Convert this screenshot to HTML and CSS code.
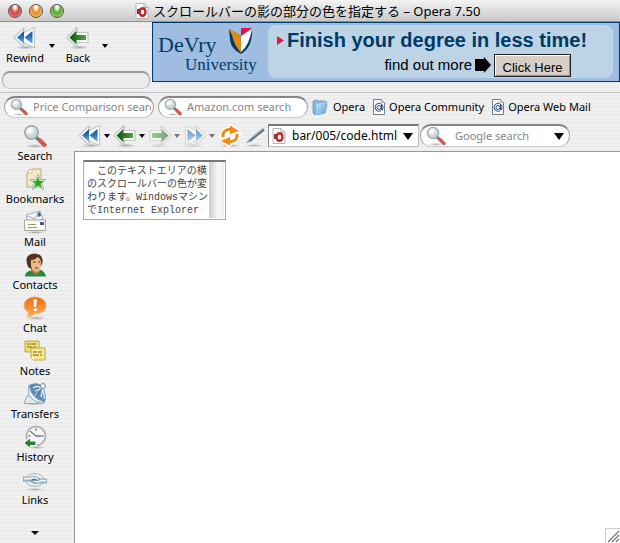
FILE: index.html
```html
<!DOCTYPE html>
<html lang="ja">
<head>
<meta charset="utf-8">
<title>スクロールバーの影の部分の色を指定する – Opera 7.50</title>
<link rel="stylesheet" href="styles.css">
</head>
<body>
<svg class="defs" aria-hidden="true">
  <defs>
    <linearGradient id="blue" x1="0" y1="0" x2="0" y2="1"><stop offset="0" stop-color="#16498c"/><stop offset=".5" stop-color="#2b78bd"/><stop offset="1" stop-color="#79bfe8"/></linearGradient>
    <linearGradient id="green" x1="0" y1="0" x2="1" y2="0"><stop offset="0" stop-color="#0d5412"/><stop offset="1" stop-color="#4fa63f"/></linearGradient>
    <linearGradient id="orange" x1="0" y1="0" x2="0" y2="1"><stop offset="0" stop-color="#f06a10"/><stop offset="1" stop-color="#ffb04a"/></linearGradient>
    <radialGradient id="lens" cx=".4" cy=".35"><stop offset="0" stop-color="#fff"/><stop offset="1" stop-color="#bfd0d4"/></radialGradient>
    <linearGradient id="fold" x1="0" y1="0" x2="1" y2="1"><stop offset="0" stop-color="#d9effc"/><stop offset="1" stop-color="#4f9ddd"/></linearGradient>
    <radialGradient id="shade"><stop offset="0" stop-color="#000" stop-opacity=".3"/><stop offset="1" stop-color="#000" stop-opacity="0"/></radialGradient>
  </defs>
  <symbol id="rewind" viewBox="0 0 24 24">
    <ellipse cx="13" cy="21.500" rx="10" ry="2" fill="url(#shade)"/>
    <path d="M1 11.500 11 2v4.500L21.500 1.500v20L11 16.500V21z" fill="#fff" stroke="#c3c7cc" stroke-width="1.200" stroke-linejoin="round"/>
    <path d="M4 11.500 11 5v13zM11.500 11.500 19.500 5v13z" fill="url(#blue)"/>
  </symbol>
  <symbol id="forward" viewBox="0 0 24 24"><g transform="matrix(-1 0 0 1 24 0)"><use href="#rewind"/></g></symbol>
  <symbol id="back" viewBox="0 0 24 24">
    <ellipse cx="13" cy="21.500" rx="10" ry="2" fill="url(#shade)"/>
    <path d="M1 11.500 11 1.500V6.500h11v10H11v5z" fill="#fff" stroke="#bfc5bf" stroke-width="1.200" stroke-linejoin="round"/>
    <path d="M3.500 11.500l7-7V9H20v5h-9.500v4.500z" fill="url(#green)"/>
  </symbol>
  <symbol id="next" viewBox="0 0 24 24"><g transform="matrix(-1 0 0 1 24 0)"><use href="#back"/></g></symbol>
  <symbol id="reload" viewBox="0 0 24 24">
    <ellipse cx="12" cy="21.500" rx="10" ry="2" fill="url(#shade)"/>
    <g fill="none" stroke="#fff" stroke-width="6" stroke-linejoin="round"><path d="M5 12q0-6 7-7M19 11q0 6-7 7"/><path d="M13 3v7h7zM11 20v-7H4z"/></g>
    <g fill="none" stroke="#f38a12" stroke-width="3"><path d="M5 13q-1-7 8-8"/><path d="M19 10q1 7-8 8"/></g>
    <path d="M12 10V1.500L21 7zM12 21.500V13l-9 4z" fill="#f38a12"/>
  </symbol>
  <symbol id="pen" viewBox="0 0 24 24">
    <ellipse cx="11" cy="21.500" rx="10" ry="1.500" fill="url(#shade)"/>
    <path d="M2 20 5 16 19 4q3-1 3 2L8 18z" fill="#8996a2" stroke="#e8eaec" stroke-width="1"/>
    <path d="M7 17 21 6" stroke="#5f6c78" stroke-width="1.500"/><path d="M6 15.500 19 5" stroke="#b9c4cd"/>
  </symbol>
  <symbol id="search" viewBox="0 0 24 24">
    <ellipse cx="12" cy="22" rx="10" ry="2" fill="url(#shade)"/>
    <path d="m13 13 9 9" stroke="#747474" stroke-width="3.500"/>
    <path d="m17 16 5 5" stroke="#dd564d" stroke-width="3.500" stroke-linecap="round"/>
    <circle cx="8.500" cy="8.500" r="6.800" fill="url(#lens)" stroke="#9aa5a8" stroke-width="1.400"/>
    <path d="M5 9q0-4 4-4" fill="none" stroke="#fff" stroke-width="1.500"/>
  </symbol>
  <symbol id="bookmarks" viewBox="0 0 24 24">
    <path d="M4 5q2-3 5-3h9v18H4z" fill="#f4e9c6" stroke="#bda978"/><path d="M4 6h5V2" fill="#fff" stroke="#d1c093"/>
    <path d="m15 7.500 2.500 5h5.500l-4 4 1.500 6-5.500-3-5.500 3 1.500-6-4-4h5.500z" fill="#fff" stroke="#999" stroke-width=".800"/>
    <path d="m15 9.500 1.700 4.200H21l-3.300 3 1.300 4.300-4-2.500-4 2.500 1.300-4.300-3.300-3h4.300z" fill="#22aa22"/>
  </symbol>
  <symbol id="mail" viewBox="0 0 24 24">
    <path d="m3 5 14-4 3 8-15 5z" fill="#f4f6f7" stroke="#a4abb0"/><path d="m14 3 3-1 1 4-3 1z" fill="#42699c"/><path d="m4 6 8 3 3-6" fill="none" stroke="#aaa"/>
    <path d="M1.500 10h21v10.500h-21z" fill="#fffdf0" stroke="#a6a79e"/><path d="M17 12h4v3h-4z" fill="#35639f"/><path d="M5 14.500h8M5 17.500h9" stroke="#9c9a87"/>
    <ellipse cx="12" cy="22.500" rx="11" ry="1.500" fill="url(#shade)"/>
  </symbol>
  <symbol id="contacts" viewBox="0 0 24 24">
    <path d="M2 23.500q0-5 6-6l9-1q5 2 6 7z" fill="#248a40"/><path d="M8 13h9v6l-4 3-5-4z" fill="#b87950"/>
    <path d="M4 10Q2 5 6 2q5-3 11 0 4 3 2 9l-1 2-9 3q-5-1-5-6z" fill="#4d3423"/>
    <path d="M8 7q5 0 6-3 4 1 4 6 0 9-5 9-5-2-5-7z" fill="#edb986"/><path d="M10 9h2.500M15 9h2M12 15h3" stroke="#5e321f"/>
  </symbol>
  <symbol id="chat" viewBox="0 0 24 24">
    <ellipse cx="13" cy="22" rx="10" ry="2" fill="url(#shade)"/>
    <path d="M12 1c6 0 11 3 11 8.500S18 18 11 18q-3 4-7 3 2-2 1-5Q1 14 1 9.500C1 4 6 1 12 1z" fill="url(#orange)" stroke="#e5bd97"/>
    <path d="M10.500 3H14l-1 8h-2zM11 12.500h3V15h-3z" fill="#fff"/>
  </symbol>
  <symbol id="notes" viewBox="0 0 24 24">
    <path d="M2 2h14v11H2z" fill="#f4df6c" stroke="#b9a855"/><path d="M4 5h3m1 0h5M4 8h5m1 0h3" stroke="#71642b"/>
    <path d="M8 9h14v12H10l-2-2z" fill="#fae987" stroke="#b8a960"/><path d="M10 13h4m1 0h4M10 16h6m1 0h2" stroke="#71642b"/><path d="m8 19 3-1v3z" fill="#fff"/>
  </symbol>
  <symbol id="transfers" viewBox="0 0 24 24">
    <ellipse cx="12" cy="22" rx="11" ry="1.500" fill="url(#shade)"/>
    <path d="M1 21.500 4 14l5-1 7 8.500z" fill="#e3ebf1" stroke="#9aaab8"/>
    <path d="M6 3Q3 14 12 19q7 4 10 1Z" fill="#3b638f"/>
    <path d="M6 3q10-5 15 4 3 7 1 13Q7 17 6 3z" fill="#5f8bb9"/>
    <path d="M6 3q-3 11 6 16 6 3 10 1Q8 17 6 3z" fill="#eef3f6" stroke="#8ba0b4" stroke-width=".700"/>
    <path d="M10 6q4-3 8 0 4 4 3 11M12 14l8-9M12 9l8-3-2 9" fill="none" stroke="#e4edf4" stroke-width="1.300"/><path d="m13 14 6-8" stroke="#23405f" stroke-width="1"/><circle cx="20" cy="4" r="2.500" fill="#e9f0f4" stroke="#7892ab"/>
  </symbol>
  <symbol id="history" viewBox="0 0 24 24">
    <ellipse cx="14" cy="22.500" rx="9" ry="1.500" fill="url(#shade)"/>
    <circle cx="13" cy="11" r="9.500" fill="#f4f5f5" stroke="#b2b6b9" stroke-width="2"/><path d="M13 3.500v2M13 17v2M5.500 11h2M18.500 11h2M7 6l6 5h5" fill="none" stroke="#333" stroke-width="1"/>
    <path d="m0 18 7-6.500v3.500h7v6H7v3z" fill="#fff"/><path d="m1.500 18 5.500-4.500v3h5.500v3.500H7v2.500z" fill="#23852c"/>
  </symbol>
  <symbol id="links" viewBox="0 0 24 24">
    <ellipse cx="12" cy="21.500" rx="11" ry="1.500" fill="url(#shade)"/>
    <ellipse cx="12" cy="12" rx="9" ry="6.500" fill="#e7edf0" stroke="#a9b7c0"/>
    <path d="M0 9h8q5-2 9 2l-3 2q-4-3-7 0H0zM24 15h-8q-5 2-9-2l3-1q4 3 7-1h7z" fill="#9fc6de" stroke="#788e9d" stroke-width=".700"/><path d="M1 10.500h7q4-2 7 1M23 12.500h-5q-3 2-6 1" fill="none" stroke="#fff" stroke-width="1.300"/><path d="M9 12q3-2 5 0" stroke="#52636f" fill="none"/>
  </symbol>
  <symbol id="operadoc" viewBox="0 0 16 16">
    <path d="M2 .5h8l4 4v11H2z" fill="#fff" stroke="#b3b3b3"/><path d="M10 .5v4h4" fill="#ddd" stroke="#aaa"/>
    <ellipse cx="8.500" cy="9" rx="3" ry="3.800" fill="none" stroke="#bd2424" stroke-width="2.400"/><path d="M3 6h2v5H3z" fill="#8d3430"/>
  </symbol>
  <symbol id="folder" viewBox="0 0 16 16">
    <path d="m1 2 4-1 1 1h7v3h2l-2 9-10 2-2-2z" fill="#7eb9e8" stroke="#6788a4" stroke-width=".700"/><path d="m4 5 11-3-2 11-9 3z" fill="url(#fold)" stroke="#8ab6d7" stroke-width=".600"/>
  </symbol>
  <symbol id="atdoc" viewBox="0 0 16 16">
    <path d="M2.500.500h8l3 3v12h-11z" fill="#f7f9fb" stroke="#777f87"/><path d="M10.500.500v3h3" fill="#ddd" stroke="#999" stroke-width=".700"/>
    <path d="M10.500 6v4q0 1.500 1 1 1.500-3-.500-5.500-3-3-6 0-2 3 0 5.500 2 2 5 1" fill="none" stroke="#284a86" stroke-width="1"/><circle cx="8" cy="8.500" r="2" fill="none" stroke="#284a86"/>
  </symbol>
</svg>

<header class="titlebar">
  <div class="lights">
    <button class="light red" aria-label="Close"></button>
    <button class="light amber" aria-label="Minimize"></button>
    <button class="light lime" aria-label="Zoom"></button>
  </div>
  <h1 class="title"><svg class="i16"><use href="#operadoc"/></svg>スクロールバーの影の部分の色を指定する – Opera 7.50</h1>
</header>

<div class="top">
  <div class="main-tools">
    <div class="big-tools">
      <button class="tool"><svg class="i24"><use href="#rewind"/></svg><span>Rewind</span></button>
      <button class="drop" aria-label="Rewind list"></button>
      <button class="tool"><svg class="i24"><use href="#back"/></svg><span>Back</span></button>
      <button class="drop" aria-label="Back list"></button>
    </div>
    <div class="progress"></div>
  </div>
  <section class="ad">
    <div class="brand">
      <div class="brand-row"><span class="devry">DeVry</span>
        <svg class="shield" viewBox="0 0 24 27"><path d="M0 1l12 7v18Q2 21 1 12z" fill="#003a68"/><path d="m0 1 10 5 2 3v16Q5 17 3 7z" fill="#e08a18"/><path d="M12 0h11l-11 9z" fill="#dc174e"/><path d="M23 1q1 18-11 25V9z" fill="#003a68"/><path d="m12 8 11-7q-3 17-11 23z" fill="#fff"/></svg>
      </div>
      <div class="university">University</div>
    </div>
    <div class="pitch">
      <div class="headline"><svg class="marker" viewBox="0 0 7 9"><path d="m0 0 7 4.500L0 9z" fill="#df164f"/></svg>Finish your degree in less time!</div>
      <div class="more">find out more<svg class="arrow" viewBox="0 0 16 16"><path d="M0 2h9V0l7 8-7 8v-2H0z"/></svg><button class="click">Click Here</button></div>
    </div>
  </section>
</div>

<nav class="linkbar">
  <label class="pill"><svg class="i18"><use href="#search"/></svg><input type="text" placeholder="Price Comparison search" aria-label="Price Comparison search"></label>
  <label class="pill"><svg class="i18"><use href="#search"/></svg><input type="text" placeholder="Amazon.com search" aria-label="Amazon.com search"></label>
  <a href="#" class="mark"><svg class="i16"><use href="#folder"/></svg>Opera</a>
  <a href="#" class="mark tight"><svg class="i16"><use href="#atdoc"/></svg>Opera Community</a>
  <a href="#" class="mark tight"><svg class="i16"><use href="#atdoc"/></svg>Opera Web Mail</a>
</nav>

<div class="workspace">
  <aside class="sidebar">
    <button class="panel"><svg class="i24"><use href="#search"/></svg>Search</button>
    <button class="panel"><svg class="i24"><use href="#bookmarks"/></svg>Bookmarks</button>
    <button class="panel"><svg class="i24"><use href="#mail"/></svg>Mail</button>
    <button class="panel"><svg class="i24"><use href="#contacts"/></svg>Contacts</button>
    <button class="panel"><svg class="i24"><use href="#chat"/></svg>Chat</button>
    <button class="panel"><svg class="i24"><use href="#notes"/></svg>Notes</button>
    <button class="panel"><svg class="i24"><use href="#transfers"/></svg>Transfers</button>
    <button class="panel"><svg class="i24"><use href="#history"/></svg>History</button>
    <button class="panel"><svg class="i24"><use href="#links"/></svg>Links</button>
    <button class="drop more-panels" aria-label="More panels"></button>
  </aside>
  <main class="content">
    <div class="navbar">
      <button class="nav" aria-label="Rewind"><svg class="i24"><use href="#rewind"/></svg></button><button class="drop" aria-label="Rewind list"></button>
      <button class="nav" aria-label="Back"><svg class="i24"><use href="#back"/></svg></button><button class="drop" aria-label="Back list"></button>
      <button class="nav dim" aria-label="Forward"><svg class="i24"><use href="#next"/></svg></button><button class="drop dim" aria-label="Forward list"></button>
      <button class="nav dim" aria-label="Fast forward"><svg class="i24"><use href="#forward"/></svg></button><button class="drop dim" aria-label="Fast forward list"></button>
      <button class="nav" aria-label="Reload"><svg class="i24"><use href="#reload"/></svg></button>
      <button class="nav edit" aria-label="Edit"><svg class="i24"><use href="#pen"/></svg></button>
      <div class="address"><svg class="i16"><use href="#operadoc"/></svg><input type="text" value="bar/005/code.html" aria-label="Address"><button class="drop big" aria-label="Address list"></button></div>
      <div class="pill google"><svg class="i20"><use href="#search"/></svg><input type="text" placeholder="Google search" aria-label="Google search"><button class="drop big" aria-label="Search engines"></button></div>
    </div>
    <div class="page">
      <div class="field"><textarea rows="4" aria-label="テキストエリア">　このテキストエリアの横のスクロールバーの色が変わります。WindowsマシンでInternet Explorer</textarea><div class="track"></div></div>
      <svg class="grip" viewBox="0 0 15 15"><path d="M.5 15V.5H15" fill="none" stroke="#ccc"/><path d="M3 14 14 3M7 14l7-7M11 14l3-3" stroke="#777" stroke-width="1.200"/></svg>
    </div>
  </main>
</div>
</body>
</html>
```

FILE: styles.css
```css
* { box-sizing: border-box; }

body {
  margin: 0;
  min-height: 100vh;
  display: flex;
  flex-direction: column;
  background: repeating-linear-gradient(#f0f0f0 0 2px, #ececec 2px 4px);
  font: 11px/14px "Noto Sans", "Noto Sans CJK JP", sans-serif;
  color: #000;
}

button, input, textarea { font: inherit; color: inherit; margin: 0; padding: 0; border: 0; background: none; border-radius: 0; }
input, textarea { outline: 0; min-width: 0; }
svg { display: block; flex: none; }
.defs { position: absolute; width: 0; height: 0; }
.i16 { width: 16px; height: 16px; }
.i18 { width: 18px; height: 18px; }
.i20 { width: 20px; height: 20px; }
.i24 { width: 24px; height: 24px; }

.titlebar {
  display: grid;
  grid-template-columns: 132px 1fr;
  align-items: center;
  height: 22px;
  background: linear-gradient(#f4f4f4, #c9c9c9);
  border-bottom: 1px solid #8e8e8e;
  border-radius: 7px 7px 0 0;
}
.lights { display: flex; gap: 7px; padding-left: 8px; }
.light { width: 14px; height: 14px; border-radius: 50%; border: 1px solid #5d5050; }
.red { background: radial-gradient(ellipse at 50% 15%, #fff 0 10%, #c94540 45%, #f8a5a0 100%); }
.amber { background: radial-gradient(ellipse at 50% 15%, #fff 0 10%, #e58b24 45%, #ffe688 100%); }
.lime { background: radial-gradient(ellipse at 50% 15%, #fff 0 10%, #55a32b 45%, #ccf58a 100%); }
.title { display: flex; align-items: center; gap: 3px; margin: 0; padding-left: 2px; font-size: 13px; font-weight: 400; white-space: nowrap; }

.top { display: flex; height: 71px; border-bottom: 1px solid #c4c4c4; }
.main-tools { flex: none; width: 152px; padding: 3px 2px; }
.big-tools { display: flex; align-items: center; height: 42px; margin-bottom: 4px; }
.tool { width: 46px; display: flex; flex-direction: column; align-items: center; }
.tool span { line-height: 16px; }
.progress { height: 18px; border: 1px solid #aaa; border-top: 2px solid #999; border-bottom-color: #ccc; border-radius: 8px; background: #ececec; }

.drop { display: flex; flex: none; width: 7px; justify-content: center; }
.drop::before { content: ""; border: 3px solid transparent; border-top: 4px solid #000; border-bottom: 0; }
.drop.big { width: 12px; }
.drop.big::before { border-width: 7px 5px 0; }
.dim { opacity: .5; }

.ad { flex: 1; height: 60px; display: flex; padding: 2px 6px 3px 5px; background: #9ebde0; border: 1px solid #003a68; }
.brand { flex: none; width: 110px; color: #003a68; font-family: "Liberation Serif", serif; }
.brand-row { display: flex; gap: 12px; height: 29px; }
.devry { font-size: 22px; line-height: 40px; }
.shield { width: 24px; height: 27px; margin-top: 3px; }
.university { padding-left: 27px; font-size: 17px; line-height: 22px; }
.pitch { flex: 1; padding: 3px 9px; background: #bcd4e5; border-radius: 8px; font-family: "Liberation Sans", sans-serif; }
.headline { display: flex; align-items: center; gap: 3px; font-size: 20px; line-height: 24px; font-weight: 700; color: #003a68; white-space: nowrap; }
.marker { width: 7px; height: 9px; }
.more { display: flex; align-items: center; justify-content: flex-end; gap: 3px; padding-right: 33px; font-size: 15px; line-height: 26px; white-space: nowrap; }
.arrow { width: 16px; height: 16px; }
.click { width: 77px; height: 23px; font-size: 13px; background: #d6cec7; border: 1px solid #222; box-shadow: inset 1px 1px #fff, inset -1px -1px #8e8a86; }

.linkbar { display: flex; align-items: center; gap: 4px; height: 27px; padding-left: 4px; }
.pill { display: flex; align-items: center; flex: none; gap: 9px; width: 150px; height: 22px; padding: 0 4px 0 5px; background: #fff; border: 1px solid #a7a7a7; border-top: 2px solid #858585; border-bottom-color: #ccc; border-radius: 11px; }
.pill input { flex: 1; }
.pill ::placeholder { color: #858585; opacity: 1; }
.linkbar .pill { gap: 5px; padding-right: 2px; }
.mark { display: flex; align-items: center; gap: 5px; color: #000; text-decoration: none; white-space: nowrap; }
.tight { gap: 2px; padding-left: 2px; }

.workspace { flex: 1; display: flex; }
.sidebar { flex: none; width: 74px; padding: 4px 4px 0 0; display: flex; flex-direction: column; align-items: center; }
.panel { width: 70px; height: 43px; display: flex; flex-direction: column; align-items: center; gap: 1px; }
.more-panels { margin-top: 20px; width: 10px; }
.more-panels::before { border-width: 4px 4px 0; }

.content { flex: 1; min-width: 0; display: flex; flex-direction: column; }
.navbar { display: flex; align-items: center; height: 31px; padding-left: 4px; }
.navbar .nav { width: 24px; margin-right: 1px; }
.navbar .nav + .drop { margin-right: 3px; }
.navbar .edit { margin: 0 1px 0 0; }
.address { display: flex; align-items: center; flex: none; width: 151px; height: 23px; gap: 5px; padding: 0 4px 0 2px; background: #fff; border: 1px solid #bbb; border-top: 2px solid #777; border-left-color: #888; font-size: 12px; }
.address input { flex: 1; }
.google { margin-left: 1px; height: 23px; }

.page { flex: 1; position: relative; padding: 8px; background: #fff; border: 1px solid #999; border-right: 0; border-bottom: 0; }
.field { display: flex; width: 143px; height: 60px; border: 1px solid #aaa; border-top: 2px solid #777; padding-right: 1px; }
.field textarea { flex: 1; resize: none; overflow: hidden; padding: 3px 0 0 3px; font: 10px/13px "Liberation Mono", "Noto Sans CJK JP", monospace; color: #444; }
.track { flex: none; width: 15px; height: 56px; background: linear-gradient(90deg, #ccc, #f8f8f8 60%, #eee); }
.grip { position: absolute; right: 0; bottom: 0; width: 15px; height: 15px; }
```
